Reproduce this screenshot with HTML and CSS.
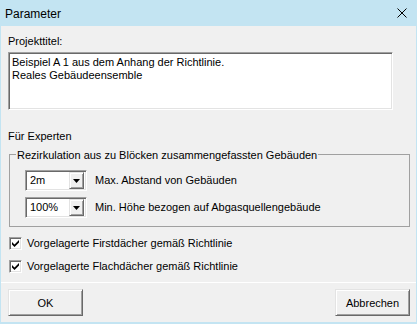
FILE: index.html
```html
<!DOCTYPE html>
<html lang="de">
<head>
<meta charset="utf-8">
<title>Parameter</title>
<link rel="stylesheet" href="styles.css">
</head>
<body>
<div class="window">
  <div class="titlebar">
    <span class="title">Parameter</span>
    <svg class="close" width="10" height="10" viewBox="0 0 10 10"><path d="M0.5 0.5 L9.5 9.5 M9.5 0.5 L0.5 9.5" stroke="#000" stroke-width="1" fill="none"/></svg>
  </div>
  <div class="content">
    <div class="label">Projekttitel:</div>
    <div class="textarea">
      <div>Beispiel A 1 aus dem Anhang der Richtlinie.</div>
      <div>Reales Gebäudeensemble</div>
    </div>
    <div class="section">Für Experten</div>
    <fieldset class="group">
      <legend>Rezirkulation aus zu Blöcken zusammengefassten Gebäuden</legend>
      <div class="row">
        <div class="combo"><span class="value">2m</span><span class="dd"><svg width="7" height="4" viewBox="0 0 7 4"><path d="M0 0 H7 L3.5 4 Z" fill="#000"/></svg></span></div>
        <span class="row-label">Max. Abstand von Gebäuden</span>
      </div>
      <div class="row">
        <div class="combo"><span class="value">100%</span><span class="dd"><svg width="7" height="4" viewBox="0 0 7 4"><path d="M0 0 H7 L3.5 4 Z" fill="#000"/></svg></span></div>
        <span class="row-label">Min. Höhe bezogen auf Abgasquellengebäude</span>
      </div>
    </fieldset>
    <div class="check-row">
      <span class="checkbox"><svg width="7" height="7" viewBox="0 0 7 7"><path d="M0 2 L2.5 4.5 L7 0 V2.5 L2.5 7 L0 4.5 Z" fill="#000"/></svg></span>
      <span>Vorgelagerte Firstdächer gemäß Richtlinie</span>
    </div>
    <div class="check-row">
      <span class="checkbox"><svg width="7" height="7" viewBox="0 0 7 7"><path d="M0 2 L2.5 4.5 L7 0 V2.5 L2.5 7 L0 4.5 Z" fill="#000"/></svg></span>
      <span>Vorgelagerte Flachdächer gemäß Richtlinie</span>
    </div>
  </div>
  <div class="footer">
    <button class="btn">OK</button>
    <button class="btn">Abbrechen</button>
  </div>
</div>
</body>
</html>
```
FILE: styles.css
```css
html, body {
  margin: 0;
  padding: 0;
  background: #f0f0f0;
}
body {
  font-family: "Liberation Sans", Arial, sans-serif;
  font-size: 11px;
  color: #000;
}
.window {
  width: 417px;
  height: 324px;
  box-sizing: border-box;
  border: 1px solid #c3e4f2;
  border-top: 0;
  border-bottom-width: 2px;
  background: #f0f0f0;
  display: flex;
  flex-direction: column;
}
.titlebar {
  flex: none;
  height: 26px;
  background: #c3e4f2;
  display: flex;
  align-items: center;
  justify-content: space-between;
  padding: 0 9px 0 4px;
}
.title {
  font-size: 12px;
  line-height: 14px;
  padding-top: 1px;
}
.close {
  display: block;
}
.content {
  flex: 1;
  padding: 9px 0 0 7px;
}
.label {
  line-height: 13px;
}
.textarea {
  margin-top: 4px;
  width: 385px;
  height: 58px;
  box-sizing: border-box;
  background: #fff;
  border: 1px solid;
  border-color: #a0a0a0 #fff #fff #a0a0a0;
  box-shadow: inset 1px 1px 0 #696969, inset -1px -1px 0 #e3e3e3;
  padding: 3px 3px;
  line-height: 13px;
}
.section {
  margin-top: 20px;
  line-height: 13px;
}
.group {
  margin: 3px 0 0 1px;
  width: 401px;
  box-sizing: border-box;
  border: 1px solid #a0a0a0;
  padding: 0 0 8px 6px;
  min-width: 0;
}
.group legend {
  padding: 3px 1px 0;
  line-height: 13px;
}
.row {
  display: flex;
  align-items: center;
  padding-left: 9px;
  margin-top: 6px;
}
.row:first-of-type {
  margin-top: 8px;
}
.combo {
  width: 62px;
  height: 21px;
  box-sizing: border-box;
  background: #fff;
  border: 1px solid;
  border-color: #a0a0a0 #fff #fff #a0a0a0;
  box-shadow: inset 1px 1px 0 #696969, inset -1px -1px 0 #e3e3e3;
  padding: 2px;
  display: flex;
  align-items: center;
  justify-content: space-between;
}
.value {
  padding-left: 2px;
  line-height: 13px;
}
.dd {
  width: 15px;
  height: 17px;
  box-sizing: border-box;
  background: #f0f0f0;
  border: 1px solid;
  border-color: #e3e3e3 #696969 #696969 #e3e3e3;
  box-shadow: inset 1px 1px 0 #fff, inset -1px -1px 0 #a0a0a0;
  display: flex;
  align-items: center;
  justify-content: center;
}
.dd svg {
  display: block;
}
.row-label {
  margin-left: 8px;
  line-height: 13px;
}
.check-row {
  display: flex;
  align-items: center;
  margin-left: 1px;
  margin-top: 10px;
  line-height: 13px;
}
.check-row + .check-row {
  margin-top: 10px;
}
.checkbox {
  width: 13px;
  height: 13px;
  box-sizing: border-box;
  background: #fff;
  border: 1px solid;
  border-color: #a0a0a0 #fff #fff #a0a0a0;
  box-shadow: inset 1px 1px 0 #696969, inset -1px -1px 0 #e3e3e3;
  display: flex;
  align-items: center;
  justify-content: center;
  margin-right: 5px;
}
.checkbox svg {
  display: block;
}
.footer {
  flex: none;
  border-top: 1px solid #fff;
  padding: 6px 6px 6px 7px;
  display: flex;
  justify-content: space-between;
}
.btn {
  width: 75px;
  height: 27px;
  box-sizing: border-box;
  font: inherit;
  color: #000;
  background: #f0f0f0;
  border: 1px solid;
  border-color: #e3e3e3 #696969 #696969 #e3e3e3;
  box-shadow: inset 1px 1px 0 #fff, inset -1px -1px 0 #a0a0a0;
  padding: 0;
  margin: 0;
}
```
